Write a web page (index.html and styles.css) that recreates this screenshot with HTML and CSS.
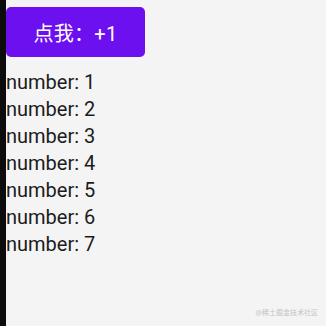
FILE: index.html
```html
<!DOCTYPE html>
<html lang="zh">
<head>
<meta charset="utf-8">
<title>Counter</title>
<link rel="stylesheet" href="styles.css">
</head>
<body>
<div class="app">
  <div class="edge"></div>
  <main class="content">
    <button class="btn">点我：+1</button>
    <ul class="list">
      <li>number: 1</li>
      <li>number: 2</li>
      <li>number: 3</li>
      <li>number: 4</li>
      <li>number: 5</li>
      <li>number: 6</li>
      <li>number: 7</li>
    </ul>
  </main>
  <div class="watermark">@稀土掘金技术社区</div>
</div>
</body>
</html>
```
FILE: styles.css
```css
html, body {
  margin: 0;
  padding: 0;
  width: 326px;
  height: 326px;
  overflow: hidden;
  background: #f4f4f4;
}
.app {
  position: relative;
  display: flex;
  width: 326px;
  height: 326px;
  font-family: Roboto, "Noto Sans CJK SC", sans-serif;
}
.edge {
  width: 6px;
  flex: none;
  background: #0c0c0c;
}
.content {
  flex: 1;
  display: flex;
  flex-direction: column;
  align-items: flex-start;
  padding-top: 7px;
}
.btn {
  width: 139px;
  height: 50px;
  border: none;
  border-radius: 5px;
  background: #6c10ef;
  color: #ffffff;
  font-family: Roboto, "Noto Sans CJK SC", sans-serif;
  font-size: 20px;
  padding: 0;
  margin: 0;
  letter-spacing: 0.3px;
}
.list {
  list-style: none;
  margin: 12px 0 0 0;
  padding: 0;
  color: #1c1c1c;
  font-size: 20px;
  line-height: 27px;
}
.watermark {
  position: absolute;
  right: 8px;
  bottom: 9px;
  font-family: "Noto Sans CJK SC", sans-serif;
  font-size: 7px;
  line-height: 9px;
  color: #c4c4c4;
}
```
